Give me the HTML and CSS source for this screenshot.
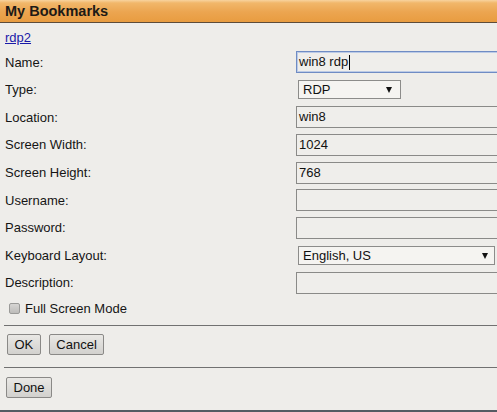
FILE: index.html
```html
<!DOCTYPE html>
<html>
<head>
<meta charset="utf-8">
<title>My Bookmarks</title>
<link rel="stylesheet" href="styles.css">
</head>
<body>
<div class="page">
  <header class="titlebar">My Bookmarks</header>
  <div class="content">
    <a class="bm-link" href="#">rdp2</a>
    <div class="form">
      <div class="row"><span class="label">Name:</span><div class="field focus">win8 rdp<span class="caret"></span></div></div>
      <div class="row"><span class="label">Type:</span><div class="select short">RDP</div></div>
      <div class="row"><span class="label">Location:</span><div class="field">win8</div></div>
      <div class="row"><span class="label">Screen Width:</span><div class="field">1024</div></div>
      <div class="row"><span class="label">Screen Height:</span><div class="field">768</div></div>
      <div class="row"><span class="label">Username:</span><div class="field"></div></div>
      <div class="row"><span class="label">Password:</span><div class="field"></div></div>
      <div class="row"><span class="label">Keyboard Layout:</span><div class="select long">English, US</div></div>
      <div class="row"><span class="label">Description:</span><div class="field"></div></div>
    </div>
    <div class="check-row"><span class="checkbox"></span><span>Full Screen Mode</span></div>
    <div class="rule"></div>
    <div class="buttons first"><button class="btn">OK</button><button class="btn">Cancel</button></div>
    <div class="rule"></div>
    <div class="buttons second"><button class="btn">Done</button></div>
  </div>
  <div class="bottom-line"></div>
</div>
</body>
</html>
```
FILE: styles.css
```css
html, body {
  margin: 0;
  padding: 0;
}
body {
  background: #eeedea;
  font-family: "Liberation Sans", Arial, sans-serif;
  font-size: 13px;
  color: #151515;
}
.page {
  width: 100%;
  overflow: hidden;
}
.titlebar {
  height: 22px;
  line-height: 23px;
  padding-left: 5px;
  font-size: 14.5px;
  font-weight: bold;
  color: #1d1a16;
  background: linear-gradient(to bottom, #f8d39e 0px, #f1b76a 3px, #eca550 12px, #e89c40 22px);
  border-bottom: 1px solid #5d4c3a;
}
.content {
  padding-left: 5px;
}
.bm-link {
  display: block;
  width: max-content;
  line-height: 15px;
  margin: 7px 0 3.4px;
  color: #1a1aa8;
  text-decoration: underline;
}
.form {
  display: flex;
  flex-direction: column;
}
.row {
  height: 27.6px;
  display: grid;
  grid-template-columns: 291px 1fr;
  align-items: center;
  overflow: hidden;
}
.label {
  line-height: 15px;
}
.field {
  box-sizing: border-box;
  width: 230px;
  height: 22px;
  line-height: 20px;
  padding-left: 2px;
  border: 1px solid #8a8a88;
  background: #efeeeb;
  color: #111;
  display: flex;
  align-items: center;
}
.field.focus {
  border-color: #6f8cc4;
  box-shadow: inset 0 0 0 1px #bccbe6;
}
.caret {
  width: 1px;
  height: 15px;
  background: #000;
  margin-left: 1px;
}
.select {
  box-sizing: border-box;
  position: relative;
  margin-left: 2px;
  height: 19px;
  line-height: 17px;
  padding-left: 4px;
  border: 1px solid #8c8c8a;
  background: #f5f4f1;
  color: #111;
}
.select::after {
  content: "";
  position: absolute;
  top: 6px;
  border-left: 3.5px solid transparent;
  border-right: 3.5px solid transparent;
  border-top: 6px solid #111;
}
.select.short {
  width: 103px;
}
.select.short::after {
  right: 8px;
}
.select.long {
  width: 197px;
}
.select.long::after {
  right: 6px;
}
.check-row {
  height: 23px;
  display: flex;
  align-items: center;
  padding-left: 4px;
}
.checkbox {
  box-sizing: border-box;
  width: 11px;
  height: 11px;
  margin-right: 5px;
  border: 1px solid #9a9a98;
  border-radius: 2px;
  background: linear-gradient(to bottom, #d6d5d3, #bdbcba);
}
.rule {
  height: 0;
  border-top: 1px solid #717171;
  margin-left: -1px;
  margin-top: 5.2px;
}
.buttons {
  display: flex;
  gap: 8px;
  padding-left: 2px;
}
.buttons.first {
  margin-top: 8px;
  margin-bottom: 11.8px;
}
.buttons.first + .rule {
  margin-top: 0;
}
.buttons.second {
  margin-top: 9px;
  padding-left: 1px;
}
.btn {
  box-sizing: border-box;
  height: 21px;
  padding: 0 6.5px;
  font-family: "Liberation Sans", Arial, sans-serif;
  font-size: 13px;
  color: #111;
  border: 1px solid #8a8987;
  border-radius: 2px;
  background: linear-gradient(to bottom, #e9e8e5, #d2d1ce);
}
.bottom-line {
  margin-top: 12px;
  height: 2px;
  background: #555b63;
}
```
